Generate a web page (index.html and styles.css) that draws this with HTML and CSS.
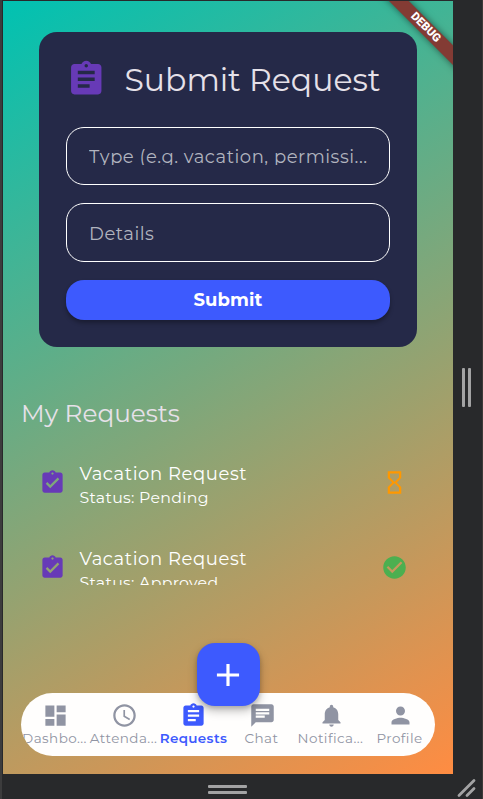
FILE: index.html
```html
<!DOCTYPE html>
<html lang="en">
<head>
<meta charset="utf-8">
<title>Requests</title>
<link rel="stylesheet" href="styles.css">
</head>
<body>
<svg class="defs" width="0" height="0">
  <symbol id="assignment" viewBox="0 0 24 24"><path d="M19 3h-4.180C14.400 1.840 13.300 1 12 1c-1.300 0-2.400.840-2.820 2H5c-1.100 0-2 .9-2 2v14c0 1.100.9 2 2 2h14c1.100 0 2-.9 2-2V5c0-1.100-.9-2-2-2zm-7 0c.550 0 1 .450 1 1s-.450 1-1 1-1-.450-1-1 .450-1 1-1zm2 14H7v-2h7v2zm3-4H7v-2h10v2zm0-4H7V7h10v2z"/></symbol>
  <symbol id="turned-in" viewBox="0 0 24 24"><path d="M19 3h-4.180C14.400 1.840 13.300 1 12 1c-1.300 0-2.400.840-2.820 2H5c-1.100 0-2 .9-2 2v14c0 1.100.9 2 2 2h14c1.100 0 2-.9 2-2V5c0-1.100-.9-2-2-2zm-7 0c.550 0 1 .450 1 1s-.450 1-1 1-1-.450-1-1 .450-1 1-1zm-2 14l-4-4 1.410-1.410L10 14.170l6.590-6.590L18 9l-8 8z"/></symbol>
</svg>
<div class="window">
  <main class="screen">
    <section class="card">
      <header class="card-head">
        <svg class="icon-lg"><use href="#assignment"/></svg>
        <h1 class="title">Submit Request</h1>
      </header>
      <div class="field"><span class="hint">Type (e.g. vacation, permissi...</span></div>
      <div class="field"><span class="hint">Details</span></div>
      <button class="submit">Submit</button>
    </section>
    <h2 class="heading">My Requests</h2>
    <section class="list">
      <article class="item">
        <svg class="icon purple"><use href="#turned-in"/></svg>
        <div class="item-text"><div class="item-title">Vacation Request</div><div class="item-sub">Status: Pending</div></div>
        <svg class="icon orange" viewBox="0 0 24 24"><path d="M6 2v6h.010L6 8.010 10 12l-4 4 .010.010H6V22h12v-5.990h-.010L18 16l-4-4 4-3.990-.010-.010H18V2H6zm10 14.500V20H8v-3.500l4-4 4 4zm-4-5l-4-4V4h8v3.500l-4 4z"/></svg>
      </article>
      <article class="item">
        <svg class="icon purple"><use href="#turned-in"/></svg>
        <div class="item-text"><div class="item-title">Vacation Request</div><div class="item-sub">Status: Approved</div></div>
        <svg class="icon green" viewBox="0 0 24 24"><path d="M12 2C6.480 2 2 6.480 2 12s4.480 10 10 10 10-4.480 10-10S17.520 2 12 2zm-2 15l-5-5 1.410-1.410L10 14.170l7.590-7.590L19 8l-9 9z"/></svg>
      </article>
    </section>
    <nav class="nav">
      <div class="tab"><svg class="icon" viewBox="0 0 24 24"><path d="M3 13h8V3H3v10zm0 8h8v-6H3v6zm10 0h8V11h-8v10zm0-18v6h8V3h-8z"/></svg><span>Dashbo...</span></div>
      <div class="tab"><svg class="icon" viewBox="0 0 24 24"><path d="M11.990 2C6.470 2 2 6.480 2 12s4.470 10 9.990 10C17.520 22 22 17.520 22 12S17.520 2 11.990 2zM12 20c-4.420 0-8-3.580-8-8s3.580-8 8-8 8 3.580 8 8-3.580 8-8 8zm.5-13H11v6l5.250 3.150.750-1.230-4.500-2.670z"/></svg><span>Attenda...</span></div>
      <div class="tab active"><svg class="icon"><use href="#assignment"/></svg><span>Requests</span></div>
      <div class="tab"><svg class="icon" viewBox="0 0 24 24"><path fill-rule="evenodd" d="M20 2H4c-1.100 0-1.990.9-1.990 2L2 22l4-4h14c1.100 0 2-.9 2-2V4c0-1.100-.9-2-2-2zM6 6h12v2H6zM6 9h12v2H6zM6 12h8v2H6z"/></svg><span>Chat</span></div>
      <div class="tab"><svg class="icon" viewBox="0 0 24 24"><path d="M12 22c1.100 0 2-.9 2-2h-4c0 1.100.890 2 2 2zm6-6v-5c0-3.070-1.640-5.640-4.500-6.320V4c0-.830-.670-1.500-1.500-1.500s-1.500.670-1.500 1.500v.680C7.630 5.360 6 7.920 6 11v5l-2 2v1h16v-1l-2-2z"/></svg><span>Notifica...</span></div>
      <div class="tab"><svg class="icon" viewBox="0 0 24 24"><path d="M12 12c2.210 0 4-1.790 4-4s-1.790-4-4-4-4 1.790-4 4 1.790 4 4 4zm0 2c-2.670 0-8 1.340-8 4v2h16v-2c0-2.660-5.330-4-8-4z"/></svg><span>Profile</span></div>
    </nav>
    <div class="fab"><svg viewBox="0 0 24 24"><path d="M19 13h-6v6h-2v-6H5v-2h6V5h2v6h6v2z"/></svg></div>
    <div class="banner">DEBUG</div>
  </main>
  <aside class="side"><i class="bar-v"></i><i class="bar-v"></i></aside>
  <footer class="bottom"><i class="bar-h"></i><i class="bar-h"></i></footer>
  <div class="corner"><svg viewBox="0 0 20 20"><path d="M3 17.500l15-15M11 17.500l7-7"/></svg></div>
</div>
</body>
</html>
```

FILE: styles.css
```css
* { box-sizing: border-box; }
body { margin: 0; background: #28292b; overflow: hidden; font-family: Montserrat, sans-serif; }
.defs { position: absolute; }
svg { display: block; fill: currentColor; flex: none; }
.window {
  width: 483px; height: 799px; padding-top: 1px;
  border-left: 2px solid #3c3c3d; border-right: 1px solid #3d3a38;
  display: grid; grid-template-columns: 451px 29px; grid-template-rows: 773px 25px;
}
.screen {
  position: relative; overflow: hidden; margin-left: 1px; padding: 31.400px 18px 0;
  background: linear-gradient(149.800deg, #00c2b2, #ff8c42);
}
.card { margin: 0 18px; padding: 27px; height: 315px; border-radius: 18px; background: #252948; display: flex; flex-direction: column; gap: 18px; }
.card-head { display: flex; align-items: center; gap: 18px; height: 40.500px; margin-bottom: 9px; }
.icon-lg { width: 40.500px; height: 40.500px; color: #673ab7; }
.title { margin: 0; font-size: 31.500px; font-weight: 400; line-height: 40px; color: #e6e1e9; white-space: nowrap; }
.field { height: 58.500px; flex: none; border: 1.200px solid #fff; border-radius: 18px; padding: 0 0 0 22px; display: flex; align-items: center; }
.hint { font-size: 18px; line-height: 20px; height: 18px; overflow: hidden; color: #b1b4bf; white-space: nowrap; letter-spacing: .520px; }
.submit { height: 40.500px; flex: none; border: 0; border-radius: 18px; background: #3d5afe; color: #fff; font: 700 18px/40px Montserrat, sans-serif; letter-spacing: .1px; padding: 0; box-shadow: 0 3px 4px rgba(0,0,0,.3); }
.heading { margin: 47.900px 0 0; line-height: 36px; font-size: 24.750px; font-weight: 400; color: #e6e1e9; white-space: nowrap; }
.list { margin-top: 10.250px; height: 143.250px; overflow: hidden; }
.item { height: 81px; margin-bottom: 4.500px; padding: 0 27px 0 18px; display: flex; align-items: center; }
.item-text { flex: 1; margin-left: 13.500px; color: #fff; white-space: nowrap; padding-top: 5px; }
.item-title { font-size: 18px; line-height: 26px; letter-spacing: .580px; }
.item-sub { font-size: 15.750px; line-height: 22px; letter-spacing: .300px; }
.icon { width: 27px; height: 27px; }
.purple { color: #673ab7; }
.orange { color: #ff9800; }
.green { color: #4caf50; }
.nav { margin-top: 108.200px; height: 63px; border-radius: 31.500px; overflow: hidden; background: #fffefd; color: #9094a3; display: grid; grid-template-columns: repeat(6, 69px); }
.tab { display: flex; flex-direction: column; align-items: center; padding-top: 9px; font-size: 13.500px; line-height: 18px; white-space: nowrap; letter-spacing: .450px; }
.tab span { margin-left: -2px; }
.active { color: #3d5afe; font-weight: 600; letter-spacing: .350px; }
.active span { margin-left: 0; }
.fab { position: absolute; left: 193.500px; top: 642.400px; width: 63px; height: 63px; border-radius: 18px; background: #3d5afe; color: #fff; display: grid; place-items: center; box-shadow: 0 5px 10px rgba(0,0,0,.25), 0 2px 4px rgba(0,0,0,.15); }
.fab svg { width: 38px; height: 38px; }
.banner { position: absolute; left: 363px; top: 20px; width: 120px; height: 13.500px; transform: rotate(45deg); background: #833b34; color: #fff; font: 900 11.500px/13.500px Roboto, sans-serif; text-align: center; text-indent: -1px; box-shadow: 0 0 7px rgba(0,0,0,.5); }
.side { display: flex; justify-content: center; align-items: center; gap: 3px; padding-right: 2px; }
.bar-v { width: 3px; height: 39px; border-radius: 1px; background: #a3a3a4; }
.bottom { display: flex; flex-direction: column; align-items: center; padding-top: 11px; gap: 3px; }
.bar-h { width: 39px; height: 3px; border-radius: 1px; background: #a3a3a4; }
.corner svg { width: 20px; height: 20px; margin: 4px 0 0 3px; stroke: #a3a3a4; stroke-width: 2.800; fill: none; stroke-linecap: round; }
```
